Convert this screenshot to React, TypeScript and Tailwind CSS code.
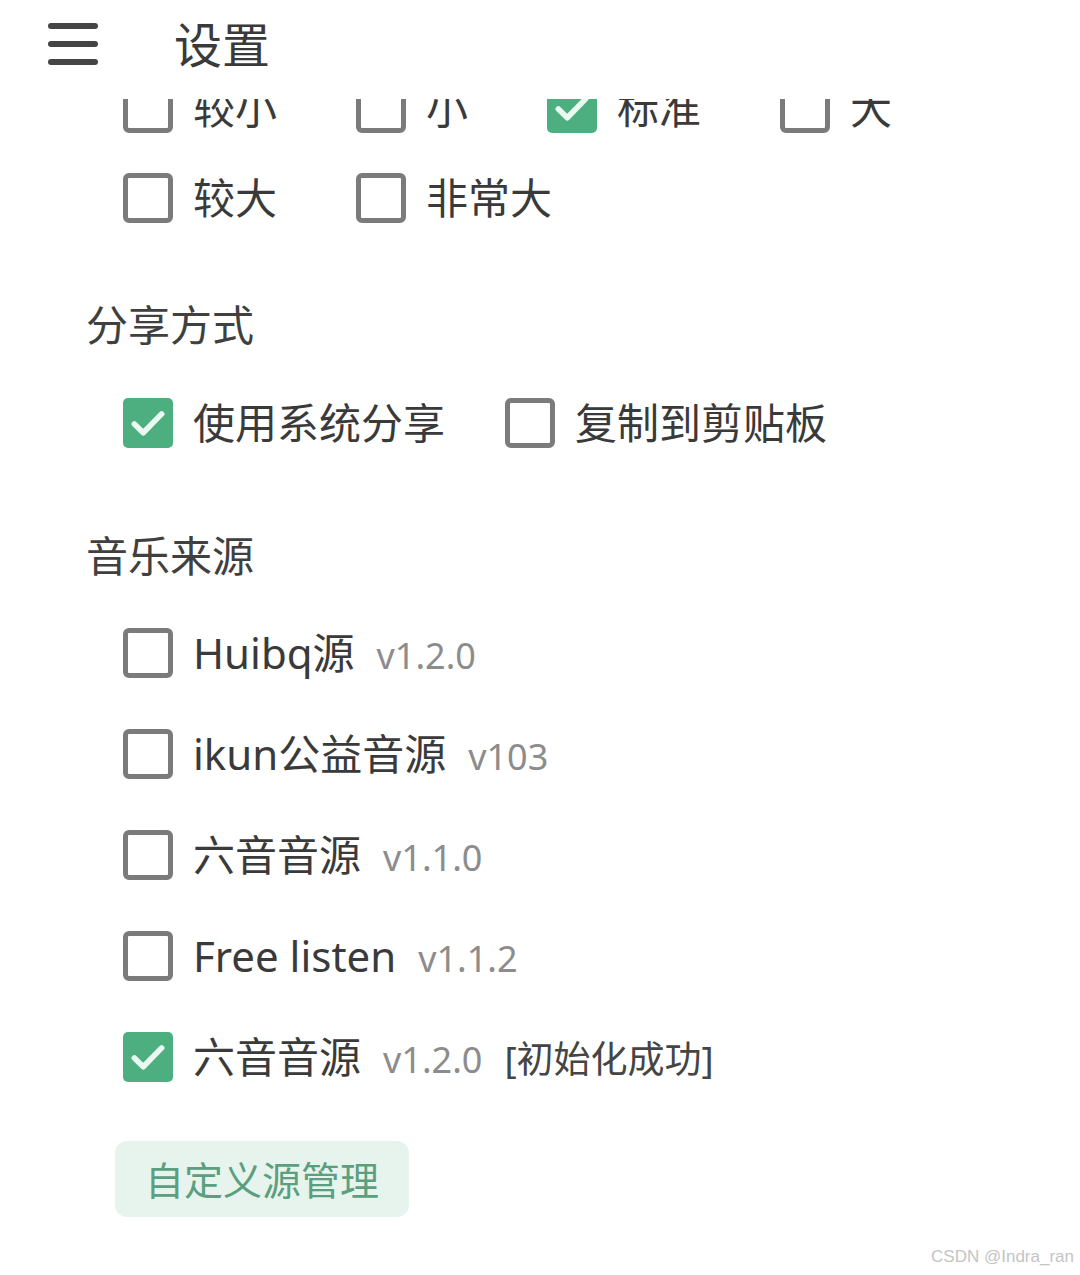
import { ReactNode } from "react";

const FONT = { fontFamily: '"Noto Sans", "Noto Sans CJK SC", sans-serif' };

function Box({ checked }: { checked?: boolean }) {
  if (checked) {
    return (
      <span className="flex h-[50px] w-[50px] shrink-0 items-center justify-center rounded-[5px] bg-[#4daf80]">
        <svg viewBox="0 0 24 24" className="h-[42px] w-[42px]">
          <path
            d="M4.2 12.6l5.1 5L19.8 6.8"
            fill="none"
            stroke="#eafaf1"
            strokeWidth="3.2"
            strokeLinecap="round"
            strokeLinejoin="round"
          />
        </svg>
      </span>
    );
  }
  return (
    <span className="block h-[50px] w-[50px] shrink-0 rounded-[6px] border-[5px] border-[#7b7b7b] bg-white" />
  );
}

function Option({
  label,
  checked,
  className = "",
}: {
  label: ReactNode;
  checked?: boolean;
  className?: string;
}) {
  return (
    <div className={`flex h-[50px] items-center gap-[20px] ${className}`}>
      <Box checked={checked} />
      <span className="text-[42px] leading-none text-[#3a3a3a]">{label}</span>
    </div>
  );
}

function SectionTitle({ children, className = "" }: { children: ReactNode; className?: string }) {
  return (
    <div className={`h-[50px] pl-[86px] text-[42px] leading-[50px] text-[#404040] ${className}`}>
      {children}
    </div>
  );
}

const sizes = [
  { label: "较小" },
  { label: "小" },
  { label: "标准", checked: true },
  { label: "大" },
  { label: "较大" },
  { label: "非常大" },
];

const sources = [
  { name: "Huibq源", version: "v1.2.0" },
  { name: "ikun公益音源", version: "v103" },
  { name: "六音音源", version: "v1.1.0" },
  { name: "Free listen", version: "v1.1.2" },
  { name: "六音音源", version: "v1.2.0", status: "[初始化成功]", checked: true },
];

export default function App() {
  return (
    <div className="relative h-[1275px] w-[1080px] overflow-hidden bg-white" style={FONT}>
      <header className="relative z-10 flex h-[99px] items-center bg-white">
        <div className="ml-[48px] flex w-[50px] flex-col gap-[12px] pb-[12px]">
          <span className="h-[6px] rounded-full bg-[#444]" />
          <span className="h-[6px] rounded-full bg-[#444]" />
          <span className="h-[6px] rounded-full bg-[#444]" />
        </div>
        <h1 className="ml-[76px] pb-[10px] text-[48px] leading-none text-[#3a3a3a]">设置</h1>
      </header>

      <main className="h-[1176px] overflow-hidden">
        <div className="-mt-[16px]">
          <div className="flex w-full flex-wrap gap-y-[40px] pl-[123px]">
            {sizes.map((s) => (
              <Option key={s.label} label={s.label} checked={s.checked} className="mr-[79px]" />
            ))}
          </div>

          <SectionTitle className="mt-[77px]">分享方式</SectionTitle>
          <div className="mt-[48px] flex pl-[123px]">
            <Option label="使用系统分享" checked className="mr-[60px]" />
            <Option label="复制到剪贴板" />
          </div>

          <SectionTitle className="mt-[83px]">音乐来源</SectionTitle>
          <div className="mt-[47px] flex flex-col gap-[51px] pl-[123px]">
            {sources.map((s, i) => (
              <Option
                key={i}
                checked={s.checked}
                label={
                  <span className="flex items-baseline">
                    <span>{s.name}</span>
                    <span className="ml-[22px] text-[36px] text-[#8c8c8c]">{s.version}</span>
                    {s.status && (
                      <span className="ml-[22px] text-[37px] text-[#454545]">{s.status}</span>
                    )}
                  </span>
                }
              />
            ))}
          </div>

          <button className="ml-[115px] mt-[59px] flex h-[76px] items-center rounded-[12px] bg-[#e7f4ee] px-[30px] text-[39px] leading-none text-[#5b9f7f]">
            自定义源管理
          </button>
        </div>
      </main>

      <div
        className="absolute bottom-[6px] right-[6px] text-[17px] text-[#c4c4c4]"
        style={{ fontFamily: '"Liberation Sans", sans-serif' }}
      >
        CSDN @Indra_ran
      </div>
    </div>
  );
}
